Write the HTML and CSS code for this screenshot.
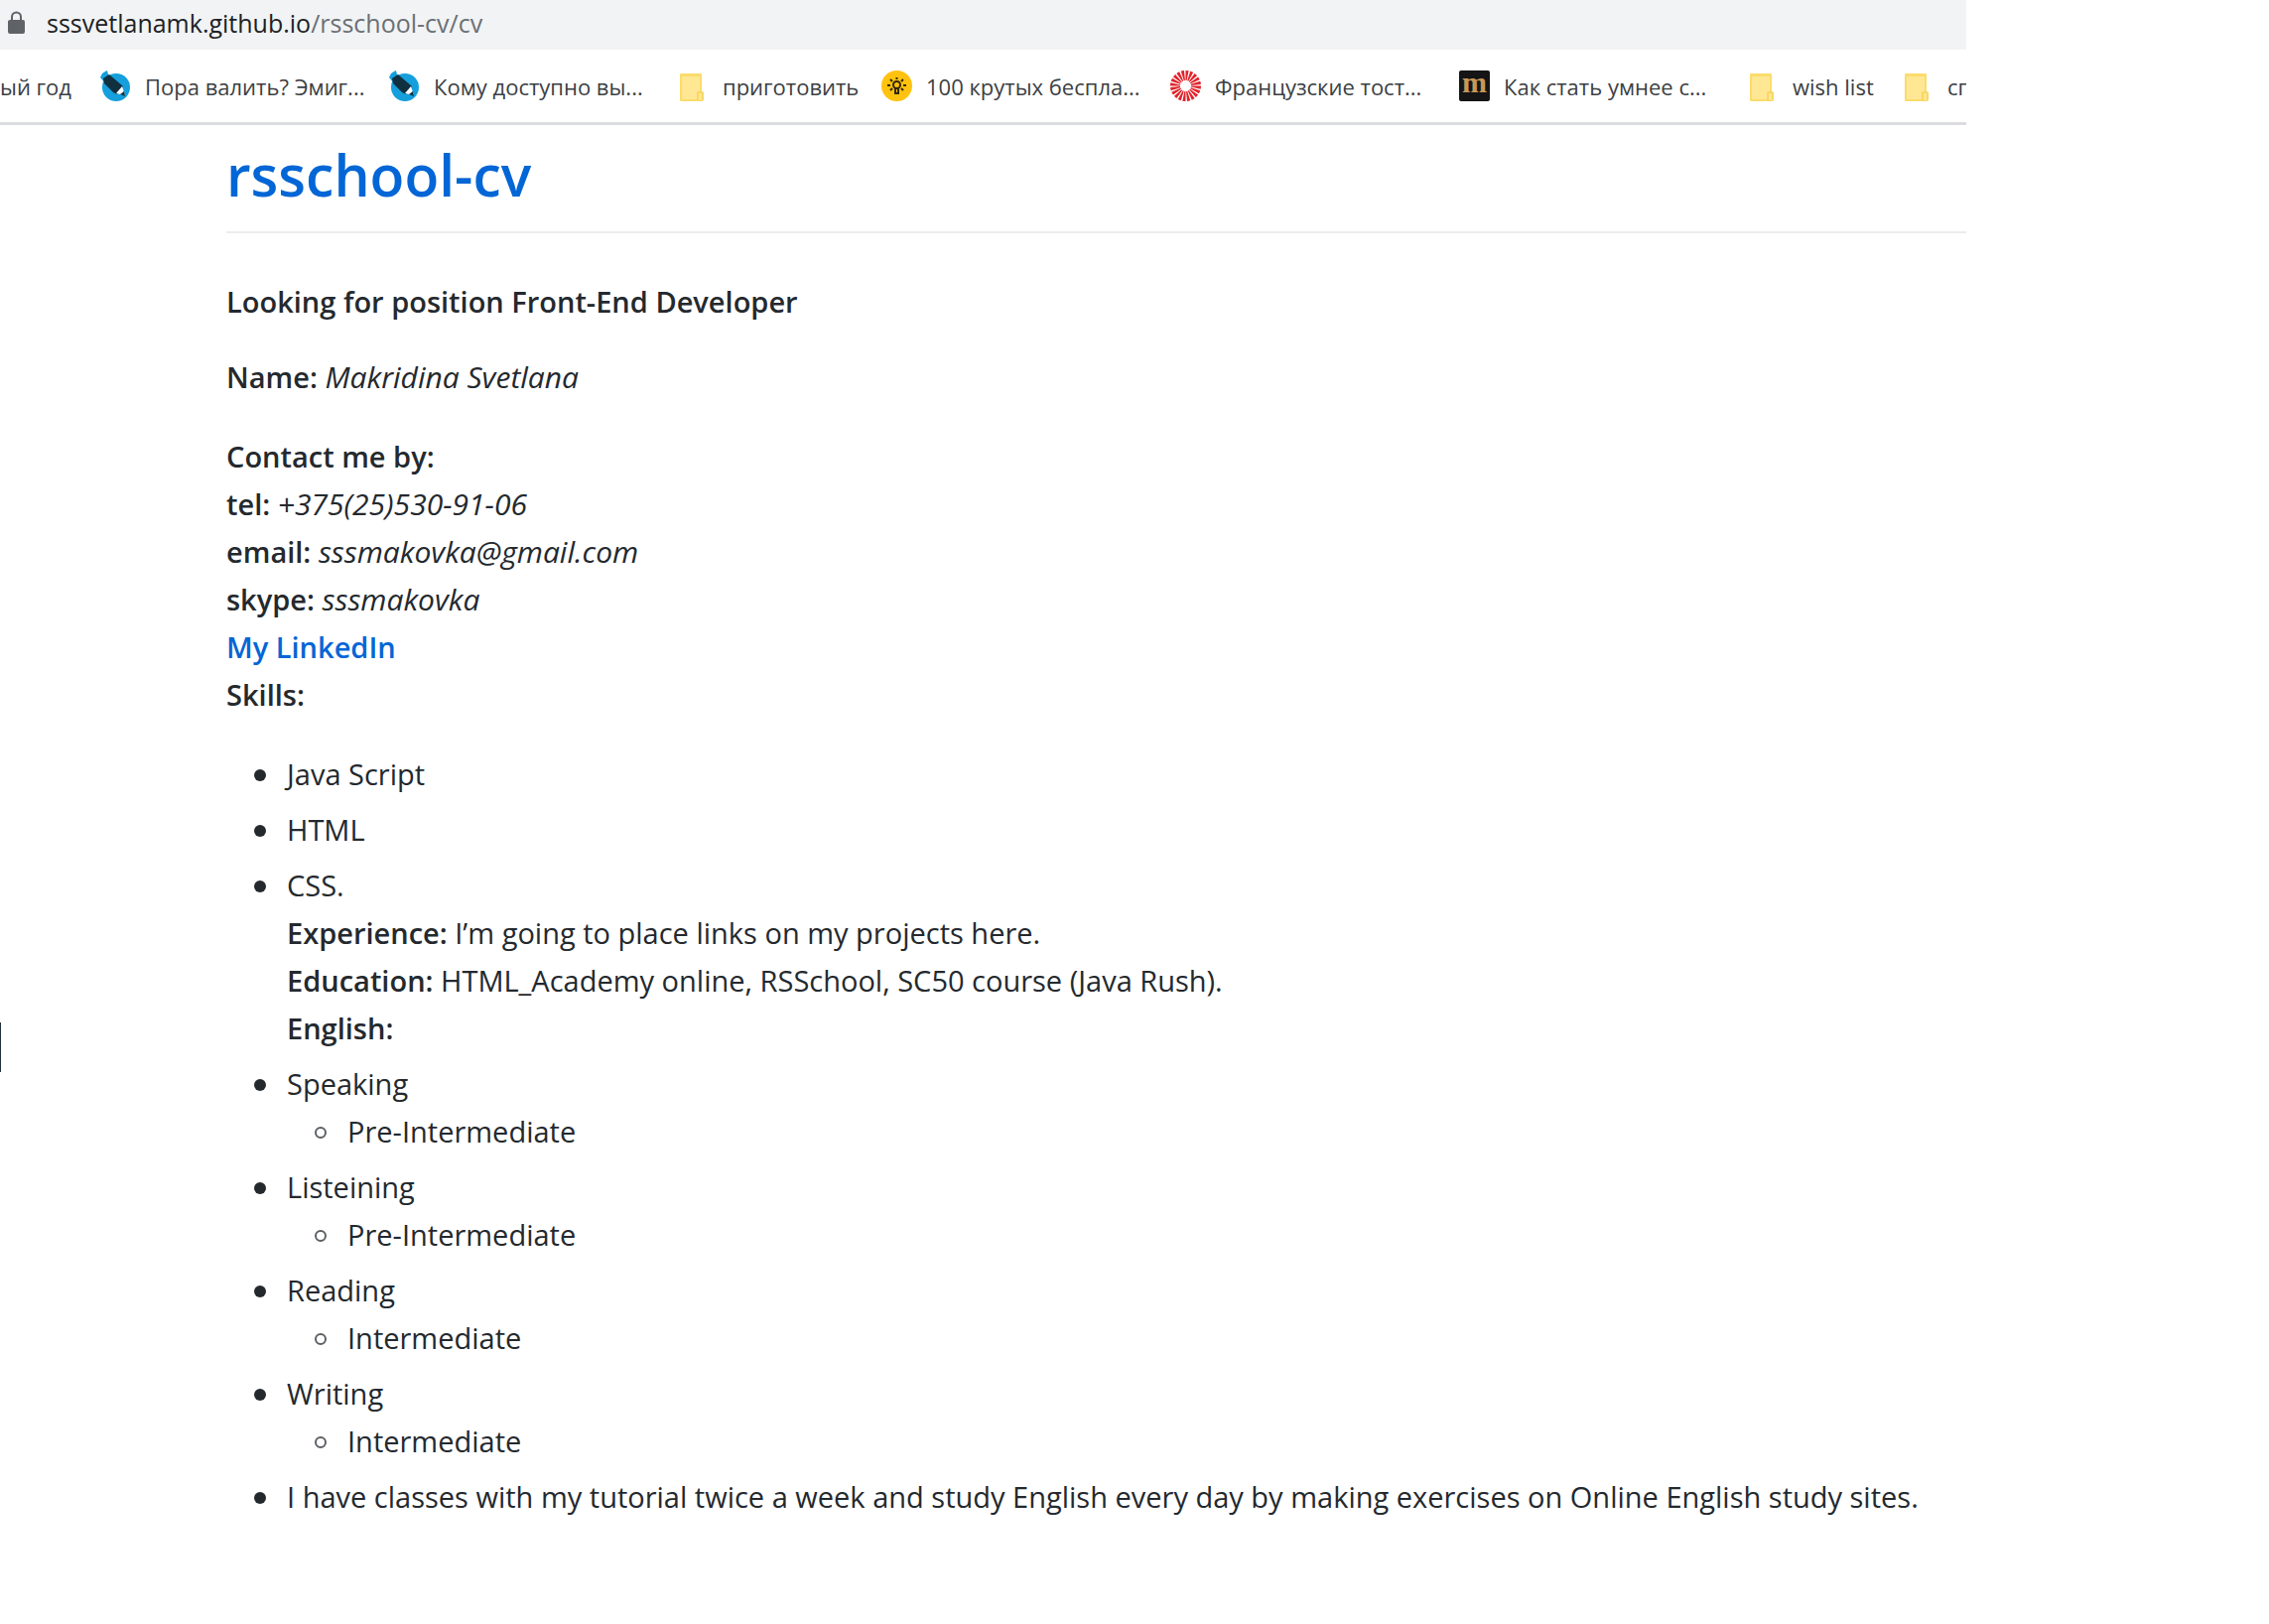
FILE: index.html
```html
<!DOCTYPE html>
<html lang="en">
<head>
<meta charset="utf-8">
<title>rsschool-cv</title>
<link rel="stylesheet" href="styles.css">
</head>
<body>
<svg class="sprites" aria-hidden="true">
  <symbol id="pen" viewBox="0 0 31 31">
    <circle cx="16" cy="17" r="14" fill="#159fdc"/>
    <path d="M0 7 2 3 5 1 7 0 8 4 10 6 4 12Z" fill="#159fdc"/>
    <path d="M3 8 9 4 23 16 17 24 13 22 4 13Z" fill="#10303f"/>
    <path d="M16 23 22 16 25 25Z" fill="#fff"/>
    <path d="M20 24 24 21 25 26Z" fill="#10303f"/>
  </symbol>
  <symbol id="folder" viewBox="0 0 31 31">
    <rect x="2" y="3" width="22" height="28" rx="1" fill="#fbdc6c"/>
    <rect x="4" y="6" width="18" height="23" fill="#ffe793"/>
    <rect x="19" y="21" width="7" height="10" rx="2" fill="#f8d763"/>
    <rect x="21" y="23" width="3" height="7" fill="#ffe793"/>
  </symbol>
  <symbol id="bulb" viewBox="0 0 31 31">
    <circle cx="15.500" cy="15.500" r="15.500" fill="#ffc20e"/>
    <g fill="none" stroke="#33270a" stroke-width="2"><circle cx="15.500" cy="14.500" r="3.500"/><path d="M14 18v5h3v-5M15.500 7v2M6 15h3M22 15h3M9 9l2 2M22 9l-2 2M9 20l2-2M22 20l-2-2"/></g>
  </symbol>
  <symbol id="rays" viewBox="0 0 31 31">
    <circle cx="15.500" cy="15.500" r="10.500" fill="none" stroke="#e0242c" stroke-width="10" pathLength="60" stroke-dasharray="2 1"/>
  </symbol>
</svg>
<header class="browser">
  <div class="address">
    <svg class="lock" viewBox="0 0 17 24"><path d="M4 10V6a4 4 0 0 1 9 0v4" fill="none" stroke="#5f6368" stroke-width="2"/><rect y="9" width="17" height="14" rx="2" fill="#5f6368"/></svg>
    <span>sssvetlanamk.github.io<span class="path">/rsschool-cv/cv</span></span>
  </div>
  <nav class="bookmarks">
    <a class="first" href="#">ый год</a>
    <a class="wide" href="#"><svg><use href="#pen"/></svg>Пора валить? Эмиг...</a>
    <a class="wide" href="#"><svg><use href="#pen"/></svg>Кому доступно вы...</a>
    <a class="dir" href="#"><svg><use href="#folder"/></svg>приготовить</a>
    <a class="wide" href="#"><svg><use href="#bulb"/></svg>100 крутых беспла...</a>
    <a class="wide" href="#"><svg><use href="#rays"/></svg>Французские тост...</a>
    <a class="wide" href="#"><span class="m">m</span>Как стать умнее с...</a>
    <a class="list" href="#"><svg><use href="#folder"/></svg>wish list</a>
    <a href="#"><svg><use href="#folder"/></svg>сп</a>
  </nav>
</header>
<main>
  <h1><a href="#">rsschool-cv</a></h1>
  <h4>Looking for position Front-End Developer</h4>
  <p><strong>Name:</strong> <em>Makridina Svetlana</em></p>
  <p><strong>Contact me by:</strong><br>
  <strong>tel:</strong> <em>+375(25)530-91-06</em><br>
  <strong>email:</strong> <em>sssmakovka@gmail.com</em><br>
  <strong>skype:</strong> <em>sssmakovka</em><br>
  <strong><a href="#">My LinkedIn</a></strong><br>
  <strong>Skills:</strong></p>
  <ul>
    <li>Java Script</li>
    <li>HTML</li>
    <li>CSS.<br>
    <strong>Experience:</strong> I’m going to place links on my projects here.<br>
    <strong>Education:</strong> HTML_Academy online, RSSchool, SC50 course (Java Rush).<br>
    <strong>English:</strong></li>
    <li>Speaking<ul><li>Pre-Intermediate</li></ul></li>
    <li>Listeining<ul><li>Pre-Intermediate</li></ul></li>
    <li>Reading<ul><li>Intermediate</li></ul></li>
    <li>Writing<ul><li>Intermediate</li></ul></li>
    <li>I have classes with my tutorial twice a week and study English every day by making exercises on Online English study sites.</li>
  </ul>
</main>
<div class="edge-mark"></div>
</body>
</html>
```
FILE: styles.css
```css
*, *::before { box-sizing: border-box; }
body {
  margin: 0;
  padding-right: 305px;
  background: #fff;
  color: #24292e;
  font: 29px/48px "Open Sans", "Noto Sans", sans-serif;
}
a { color: #0366d6; text-decoration: none; }
strong { font-weight: 600; }
em { font-size: 30px; line-height: 40px; }
.sprites { position: absolute; width: 0; height: 0; }
.address {
  display: flex;
  align-items: center;
  gap: 22px;
  height: 50px;
  padding: 0 0 4px 8px;
  background: #f1f3f4;
  color: #202124;
  font-size: 25px;
}
.lock { width: 17px; height: 24px; }
.path { color: #6b6f74; }
.bookmarks {
  display: flex;
  height: 76px;
  overflow: hidden;
  border-bottom: 3px solid #dadce0;
  font-size: 22px;
  white-space: nowrap;
}
.bookmarks a {
  display: flex;
  flex: none;
  align-items: center;
  gap: 14px;
  color: #3c4043;
}
.bookmarks svg { width: 31px; height: 31px; }
.bookmarks .first { width: 101px; }
.bookmarks .wide { width: 291px; }
.bookmarks .dir { width: 205px; }
.bookmarks .list { width: 156px; }
.m {
  width: 31px;
  height: 31px;
  border-radius: 2px;
  background: #151515;
  color: #c89858;
  font: bold 30px/24px "Liberation Serif", serif;
  text-align: center;
}
main { padding-left: 228px; }
h1 {
  margin: 0 0 49px;
  padding: 14px 0 21px;
  border-bottom: 2px solid #eaecef;
  font-size: 57px;
  font-weight: 600;
  line-height: 72px;
}
h4 { margin: 0 0 32px; font-size: 29px; font-weight: 600; line-height: 40px; }
p { margin: 0 0 32px; }
ul { margin: 0; padding-left: 61px; list-style: none; }
li + li { margin-top: 8px; }
li::before {
  content: "";
  display: inline-block;
  width: 12px;
  height: 12px;
  margin: 0 21px 4px -33px;
  border-radius: 50%;
  background: #24292e;
}
li li::before { border: 2px solid #5c6064; background: none; }
.edge-mark {
  position: absolute;
  top: 1030px;
  left: 0;
  width: 1px;
  height: 50px;
  background: #20333f;
}
```
